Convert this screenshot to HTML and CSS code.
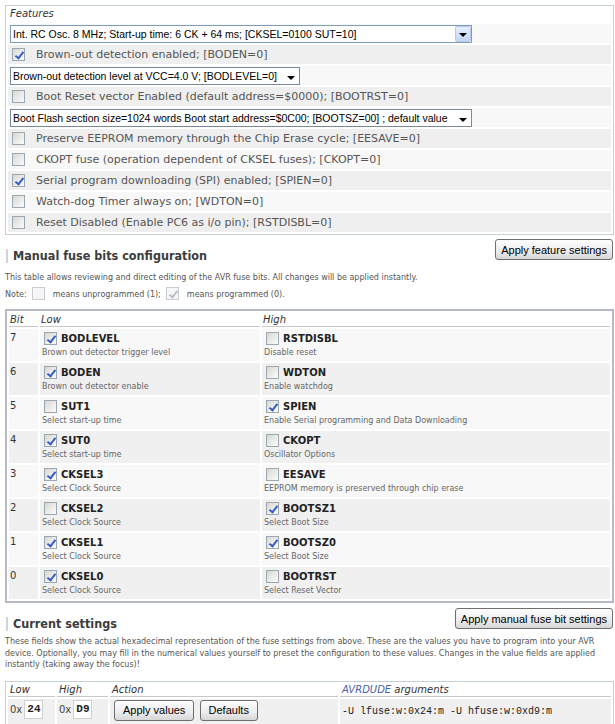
FILE: index.html
```html
<!DOCTYPE html>
<html>

<head>
  <title>AVR Fuse Calculator</title>
  <link rel="stylesheet" href="styles.css">
</head>

<body>
  <form class="feature-form">
    <div class="box features">
      <div class="box-title">Features</div>
      <div class="frow">
        <div class="sel sel-wide sel-focus"><span class="val">Int. RC Osc. 8 MHz; Start-up time: 6 CK + 64 ms; [CKSEL=0100 SUT=10]</span><span class="arrow"></span></div>
      </div>
      <div class="frow"><span class="cb on"></span><span class="flabel">Brown-out detection enabled; [BODEN=0]</span></div>
      <div class="frow">
        <div class="sel sel-mid"><span class="val">Brown-out detection level at VCC=4.0 V; [BODLEVEL=0]</span><span class="arrow"></span></div>
      </div>
      <div class="frow"><span class="cb"></span><span class="flabel">Boot Reset vector Enabled (default address=$0000); [BOOTRST=0]</span></div>
      <div class="frow">
        <div class="sel sel-wide"><span class="val">Boot Flash section size=1024 words Boot start address=$0C00; [BOOTSZ=00] ; default value</span><span class="arrow"></span></div>
      </div>
      <div class="frow"><span class="cb"></span><span class="flabel">Preserve EEPROM memory through the Chip Erase cycle; [EESAVE=0]</span></div>
      <div class="frow"><span class="cb"></span><span class="flabel">CKOPT fuse (operation dependent of CKSEL fuses); [CKOPT=0]</span></div>
      <div class="frow"><span class="cb on"></span><span class="flabel">Serial program downloading (SPI) enabled; [SPIEN=0]</span></div>
      <div class="frow"><span class="cb"></span><span class="flabel">Watch-dog Timer always on; [WDTON=0]</span></div>
      <div class="frow"><span class="cb"></span><span class="flabel">Reset Disabled (Enable PC6 as i/o pin); [RSTDISBL=0]</span></div>
    </div>
    <div class="actions"><button type="button" class="btn">Apply feature settings</button></div>
  </form>

  <h2 class="section">Manual fuse bits configuration</h2>
  <p class="info first">This table allows reviewing and direct editing of the AVR fuse bits. All changes will be applied instantly.</p>
  <p class="info note">Note: <span class="cb dim"></span> means unprogrammed (1); <span class="cb dim on"></span> means programmed (0).</p>

  <form class="fuse-form">
    <table class="fuses">
      <thead>
        <tr><th class="bit">Bit</th><th class="low">Low</th><th>High</th></tr>
      </thead>
      <tbody>
        <tr>
          <td class="bit">7</td>
          <td><div class="fname"><span class="cb on"></span><b>BODLEVEL</b></div><div class="fdesc">Brown out detector trigger level</div></td>
          <td><div class="fname"><span class="cb"></span><b>RSTDISBL</b></div><div class="fdesc">Disable reset</div></td>
        </tr>
        <tr>
          <td class="bit">6</td>
          <td><div class="fname"><span class="cb on"></span><b>BODEN</b></div><div class="fdesc">Brown out detector enable</div></td>
          <td><div class="fname"><span class="cb"></span><b>WDTON</b></div><div class="fdesc">Enable watchdog</div></td>
        </tr>
        <tr>
          <td class="bit">5</td>
          <td><div class="fname"><span class="cb"></span><b>SUT1</b></div><div class="fdesc">Select start-up time</div></td>
          <td><div class="fname"><span class="cb on"></span><b>SPIEN</b></div><div class="fdesc">Enable Serial programming and Data Downloading</div></td>
        </tr>
        <tr>
          <td class="bit">4</td>
          <td><div class="fname"><span class="cb on"></span><b>SUT0</b></div><div class="fdesc">Select start-up time</div></td>
          <td><div class="fname"><span class="cb"></span><b>CKOPT</b></div><div class="fdesc">Oscillator Options</div></td>
        </tr>
        <tr>
          <td class="bit">3</td>
          <td><div class="fname"><span class="cb on"></span><b>CKSEL3</b></div><div class="fdesc">Select Clock Source</div></td>
          <td><div class="fname"><span class="cb"></span><b>EESAVE</b></div><div class="fdesc">EEPROM memory is preserved through chip erase</div></td>
        </tr>
        <tr>
          <td class="bit">2</td>
          <td><div class="fname"><span class="cb"></span><b>CKSEL2</b></div><div class="fdesc">Select Clock Source</div></td>
          <td><div class="fname"><span class="cb on"></span><b>BOOTSZ1</b></div><div class="fdesc">Select Boot Size</div></td>
        </tr>
        <tr>
          <td class="bit">1</td>
          <td><div class="fname"><span class="cb on"></span><b>CKSEL1</b></div><div class="fdesc">Select Clock Source</div></td>
          <td><div class="fname"><span class="cb on"></span><b>BOOTSZ0</b></div><div class="fdesc">Select Boot Size</div></td>
        </tr>
        <tr>
          <td class="bit">0</td>
          <td><div class="fname"><span class="cb on"></span><b>CKSEL0</b></div><div class="fdesc">Select Clock Source</div></td>
          <td><div class="fname"><span class="cb"></span><b>BOOTRST</b></div><div class="fdesc">Select Reset Vector</div></td>
        </tr>
      </tbody>
    </table>
    <div class="actions actions-2"><button type="button" class="btn">Apply manual fuse bit settings</button></div>
  </form>

  <h2 class="section section-2">Current settings</h2>
  <p class="info para">These fields show the actual hexadecimal representation of the fuse settings from above. These are the values you have to program into your AVR device. Optionally, you may fill in the numerical values yourself to preset the configuration to these values. Changes in the value fields are applied instantly (taking away the focus)!</p>

  <table class="current">
    <thead>
      <tr>
        <th class="c-low">Low</th>
        <th class="c-high">High</th>
        <th class="c-action">Action</th>
        <th><span class="link">AVRDUDE</span> arguments</th>
      </tr>
    </thead>
    <tbody>
      <tr>
        <td>0x<span class="hex">24</span></td>
        <td>0x<span class="hex">D9</span></td>
        <td><button type="button" class="btn">Apply values</button> <button type="button" class="btn">Defaults</button></td>
        <td class="cmd"><code>-U lfuse:w:0x24:m -U hfuse:w:0xd9:m</code>
          <p class="info">Select the "Apply values" button to refresh the fuse bits and the features above.</p>
        </td>
      </tr>
    </tbody>
  </table>
</body>

</html>
```

FILE: styles.css
```css
* {
  box-sizing: border-box;
}

html {
  background-color: #fff;
}

body {
  margin: 0;
  padding: 5px 1px 0 5px;
  font-family: 'DejaVu Sans', Verdana, sans-serif;
  font-size: 10px;
  color: #444;
}

/* features box */

.box {
  border: 1px solid #c4cfd6;
  padding: 2px;
  display: flex;
  flex-direction: column;
  gap: 2px;
}

.box-title {
  height: 14px;
  line-height: 12px;
  padding-left: 2px;
  font-style: italic;
  color: #333;
}

.frow {
  height: 19px;
  display: flex;
  align-items: center;
  padding-left: 2px;
  background-color: #efefef;
}

.frow:nth-child(even) {
  background-color: #f8f8f8;
}

.frow .cb {
  margin-left: 2px;
}

.flabel {
  margin-left: 11px;
  font-size: 11px;
  color: #555;
}

.sel {
  display: flex;
  align-items: center;
  height: 18px;
  border: 1px solid #7a8a99;
  background-color: #fff;
  font-family: 'Liberation Sans', Arial, sans-serif;
  font-size: 10.5px;
  color: #000;
  padding-left: 2px;
}

.sel-wide {
  width: 462px;
}

.sel-mid {
  width: 290px;
}

.sel .val {
  flex: 1;
  white-space: nowrap;
  overflow: hidden;
}

.sel .arrow {
  width: 16px;
  height: 16px;
  position: relative;
}

.sel .arrow::after {
  content: "";
  position: absolute;
  left: 4px;
  top: 8px;
  border-left: 4px solid transparent;
  border-right: 4px solid transparent;
  border-top: 4px solid #000;
}

.sel-focus {
  border-color: #7f9db9;
}

.sel-focus .arrow {
  border: 1px solid #b6c9ea;
  border-radius: 2px;
  background: linear-gradient(#e6eefc, #c4d6f6);
}

.sel-focus .arrow::after {
  left: 3px;
  top: 6px;
}

/* checkboxes */

.cb {
  display: inline-block;
  width: 13px;
  height: 13px;
  flex: none;
  border: 1px solid #9ba7b3;
  background: linear-gradient(135deg, #d8d8d2, #fbfbfa);
  position: relative;
  vertical-align: middle;
}

.cb.on::after {
  content: "";
  position: absolute;
  left: 4px;
  top: 1px;
  width: 3px;
  height: 7px;
  border: solid #3a5dc4;
  border-width: 0 2px 2px 0;
  transform: rotate(38deg);
}

.cb.dim {
  border-color: #c9cdd2;
  background: #f6f6f6;
}

.cb.dim.on::after {
  border-color: #b9bec8;
}

/* buttons */

.actions {
  float: right;
  margin-top: 4px;
  margin-right: 1px;
}

.actions-2 {
  margin-top: 5px;
}

.btn {
  height: 21px;
  padding: 0 5px;
  border: 1px solid #6f6f6f;
  border-radius: 3px;
  background: linear-gradient(#fdfdfd, #ececec 60%, #d6d6d6);
  font-family: 'Liberation Sans', Arial, sans-serif;
  font-size: 11px;
  color: #000;
  cursor: pointer;
}

/* section headings */

.section {
  margin: 14px 0 0 1px;
  padding-left: 5px;
  border-left: 2px solid #d4d4d4;
  font-family: 'DejaVu Sans Condensed', 'DejaVu Sans', sans-serif;
  font-size: 12.5px;
  line-height: 14px;
  font-weight: bold;
  color: #3c3c3c;
}

.section-2 {
  margin-top: 14px;
}

.info {
  margin: 0;
  font-size: 8px;
  color: #555;
}

.first {
  margin-top: 10px;
  line-height: 10px;
}

.note {
  margin-top: 3px;
  line-height: 17px;
}

.note .cb {
  margin: -2px 5px 0 3px;
}

/* fuse table */

.fuses {
  clear: both;
  width: 100%;
  margin-top: 6px;
  border: 2px solid #b5b9c9;
  border-spacing: 2px;
}

.fuses th {
  height: 14px;
  padding: 0 1px;
  text-align: left;
  font-weight: normal;
  font-style: italic;
  color: #333;
  border-bottom: 1px solid #c8c8c8;
}

.fuses th.bit,
.fuses td.bit {
  width: 29px;
}

.fuses th.low {
  width: 220px;
}

.fuses td {
  height: 32px;
  padding: 2px 2px 0 2px;
  vertical-align: top;
  background-color: #f8f8f8;
}

.fuses tbody tr:nth-child(even) td {
  background-color: #f0f0f0;
}

.fuses td.bit {
  padding-top: 3px;
  padding-left: 1px;
  color: #333;
}

.fname {
  display: flex;
  align-items: center;
  height: 15px;
  padding-left: 2px;
}

.fname b {
  margin-left: 4px;
  color: #222;
}

.fdesc {
  margin-top: 2px;
  font-size: 8px;
  color: #666;
}

/* current settings */

.para {
  margin-top: 5px;
  line-height: 11.5px;
}

.current {
  width: 100%;
  margin-top: 10px;
  border: 1px solid #c4cfd6;
  border-spacing: 2px;
}

.current th {
  height: 13px;
  padding: 0 2px;
  text-align: left;
  font-weight: normal;
  font-style: italic;
  color: #333;
  border-bottom: 1px solid #c8c8c8;
}

.c-low {
  width: 47px;
}

.c-high {
  width: 51px;
}

.c-action {
  width: 228px;
}

.current td {
  padding: 1px 2px 2px 2px;
  vertical-align: top;
  background-color: #f0f0f0;
  white-space: nowrap;
}

.hex {
  display: inline-block;
  width: 19px;
  height: 19px;
  margin-left: 2px;
  line-height: 17px;
  padding-left: 2px;
  border: 1px solid #cfcfcf;
  background-color: #fff;
  font-family: 'Liberation Mono', monospace;
  font-size: 11px;
  font-weight: bold;
  color: #222;
  vertical-align: middle;
}

.current .btn {
  margin-left: 2px;
  padding: 0 8px;
}

.current td.cmd {
  white-space: normal;
  padding-top: 6px;
}

.cmd code {
  font-family: 'Liberation Mono', monospace;
  font-size: 10px;
  color: #222;
}

.cmd .info {
  margin-top: 8px;
}

.link {
  color: #4a5ea8;
}
```
